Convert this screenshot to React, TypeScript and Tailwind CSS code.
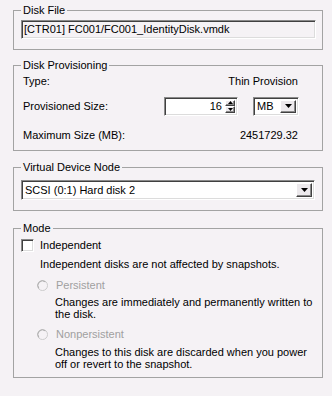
import React from 'react';

const sunken =
  'border border-t-[#8a8a8a] border-l-[#8a8a8a] border-b-[#ffffff] border-r-[#ffffff] shadow-[inset_1px_1px_0_#404040,inset_-1px_-1px_0_#dcdcdc]';

const raisedBtn =
  'bg-[#ece9ec] border border-t-[#ffffff] border-l-[#ffffff] border-b-[#404040] border-r-[#404040] shadow-[inset_-1px_-1px_0_#8a8a8a]';

const DownArrow = () => (
  <svg width="7" height="4" viewBox="0 0 7 4">
    <path d="M0 0h7L3.5 4z" fill="#000" />
  </svg>
);

const Group: React.FC<{ title: string; className?: string; children: React.ReactNode }> = ({
  title,
  className = '',
  children,
}) => (
  <fieldset className={`ml-[13px] mr-[9px] border border-[#a3a3a3] pl-[7px] pr-[6px] ${className}`}>
    <legend className="px-[2px] leading-[13px]">{title}</legend>
    {children}
  </fieldset>
);

const Combo: React.FC<{ value: string; className?: string }> = ({ value, className = '' }) => (
  <div className={`flex items-stretch bg-white ${sunken} p-[2px] ${className}`}>
    <div className="flex-1 flex items-center pl-[1px] leading-[13px]">{value}</div>
    <div className={`${raisedBtn} w-[16px] flex items-center justify-center`}>
      <DownArrow />
    </div>
  </div>
);

const Radio = () => (
  <svg width="11" height="11" viewBox="0 0 12 12">
    <circle cx="6" cy="6" r="5.5" fill="#f5f2f5" stroke="#c8c8c8" />
    <path d="M2 9A5 5 0 0 1 9 2" fill="none" stroke="#a8a8a8" />
  </svg>
);

export default function App() {
  return (
    <div
      className="w-[332px] h-[396px] bg-[#f5f2f5] text-[11px] text-black pt-[4px] overflow-hidden"
      style={{ fontFamily: '"Liberation Sans", Arial, sans-serif' }}
    >
      <Group title="Disk File" className="h-[46px]">
        <div className={`${sunken} h-[19px] mt-[3px] flex items-center px-[2px] leading-[13px]`}>
          [CTR01] FC001/FC001_IdentityDisk.vmdk
        </div>
      </Group>

      <Group title="Disk Provisioning" className="h-[92px] mt-[9px]">
        <div className="pr-[18px]">
          <div className="flex justify-between items-center h-[13px] mt-[3px] pl-[2px]">
            <span>Type:</span>
            <span>Thin Provision</span>
          </div>
          <div className="flex items-center h-[20px] mt-[8px] pl-[2px]">
            <span className="flex-1">Provisioned Size:</span>
            <div className={`flex bg-white ${sunken} w-[74px] h-[19px] p-[2px]`}>
              <div className="flex-1 text-right pr-[3px] leading-[13px]">16</div>
              <div className="flex flex-col w-[10px]">
                <div className={`${raisedBtn} flex-1 flex items-center justify-center`}>
                  <svg width="5" height="3" viewBox="0 0 5 3">
                    <path d="M2.5 0L5 3H0z" fill="#000" />
                  </svg>
                </div>
                <div className={`${raisedBtn} flex-1 flex items-center justify-center`}>
                  <svg width="5" height="3" viewBox="0 0 5 3">
                    <path d="M0 0h5L2.5 3z" fill="#000" />
                  </svg>
                </div>
              </div>
            </div>
            <Combo value="MB" className="w-[46px] h-[19px] ml-[15px] -mr-[1px]" />
          </div>
          <div className="flex justify-between items-center h-[13px] mt-[13px] pl-[2px]">
            <span>Maximum Size (MB):</span>
            <span>2451729.32</span>
          </div>
        </div>
      </Group>

      <Group title="Virtual Device Node" className="h-[50px] mt-[10px]">
        <Combo value="SCSI (0:1) Hard disk 2" className="h-[20px] mt-[6px] mr-[1px]" />
      </Group>

      <Group title="Mode" className="h-[156px] mt-[11px]">
        <div className="flex items-center h-[13px] mt-[4px]">
          <div className={`w-[13px] h-[13px] bg-white ${sunken}`} />
          <span className="ml-[6px]">Independent</span>
        </div>
        <div className="pl-[19px] mt-[6px] leading-[13px]">
          Independent disks are not affected by snapshots.
        </div>

        <div className="flex items-center h-[13px] mt-[8px] pl-[16px] text-[#a0a0a0]">
          <Radio />
          <span className="ml-[8px]">Persistent</span>
        </div>
        <div className="pl-[34px] mt-[4px] leading-[12px]">
          Changes are immediately and permanently written to the disk.
        </div>

        <div className="flex items-center h-[13px] mt-[8px] pl-[16px] text-[#a0a0a0]">
          <Radio />
          <span className="ml-[8px]">Nonpersistent</span>
        </div>
        <div className="pl-[34px] mt-[5px] leading-[12px]">
          Changes to this disk are discarded when you power off or revert to the snapshot.
        </div>
      </Group>
    </div>
  );
}
